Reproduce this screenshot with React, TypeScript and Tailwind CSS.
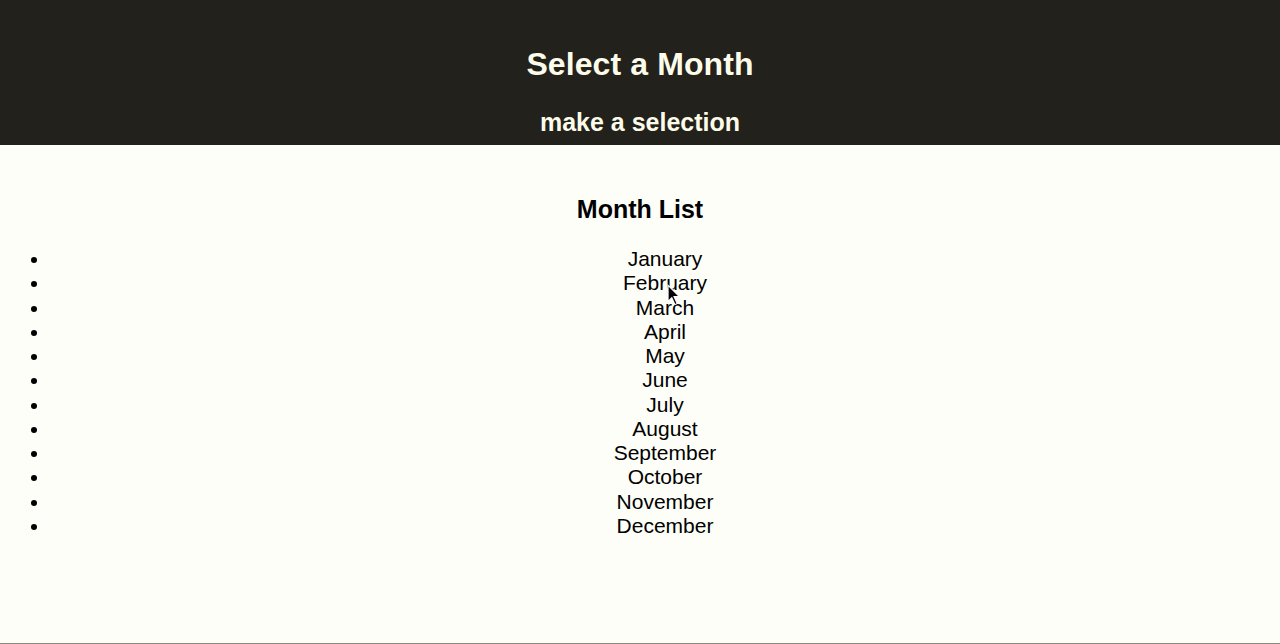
const months = [
  "January",
  "February",
  "March",
  "April",
  "May",
  "June",
  "July",
  "August",
  "September",
  "October",
  "November",
  "December",
];

function Cursor() {
  return (
    <svg
      className="absolute left-[667px] top-[284px]"
      width="15"
      height="22"
      viewBox="0 0 14 20"
    >
      <path
        d="M1 1 L1 16 L4.5 12.5 L7.5 19 L9.5 18 L6.5 11.5 L11.5 11.5 Z"
        fill="#000"
        stroke="#fff"
        strokeWidth="1"
      />
    </svg>
  );
}

export default function App() {
  return (
    <div className="relative flex h-[644px] flex-col font-['Liberation_Sans',Arial,sans-serif]">
      <header className="flex h-[145px] flex-col items-center bg-[#23211b] pt-[46px] text-[#fdfbea]">
        <h1 className="text-[32px] font-bold leading-[37px] tracking-[0.1px]">Select a Month</h1>
        <h2 className="mt-[25px] text-[25px] font-bold leading-[29px]">make a selection</h2>
      </header>
      <main className="flex-1 border-b border-[#8a8a82] bg-[#fefef8] pt-[50px] text-black">
        <h2 className="text-center text-[25px] font-bold leading-[28px]">Month List</h2>
        <ul className="mt-[24px] list-disc pl-[50px] text-center text-[21px] leading-[24.27px]">
          {months.map((m) => (
            <li key={m}>{m}</li>
          ))}
        </ul>
      </main>
      <Cursor />
    </div>
  );
}
